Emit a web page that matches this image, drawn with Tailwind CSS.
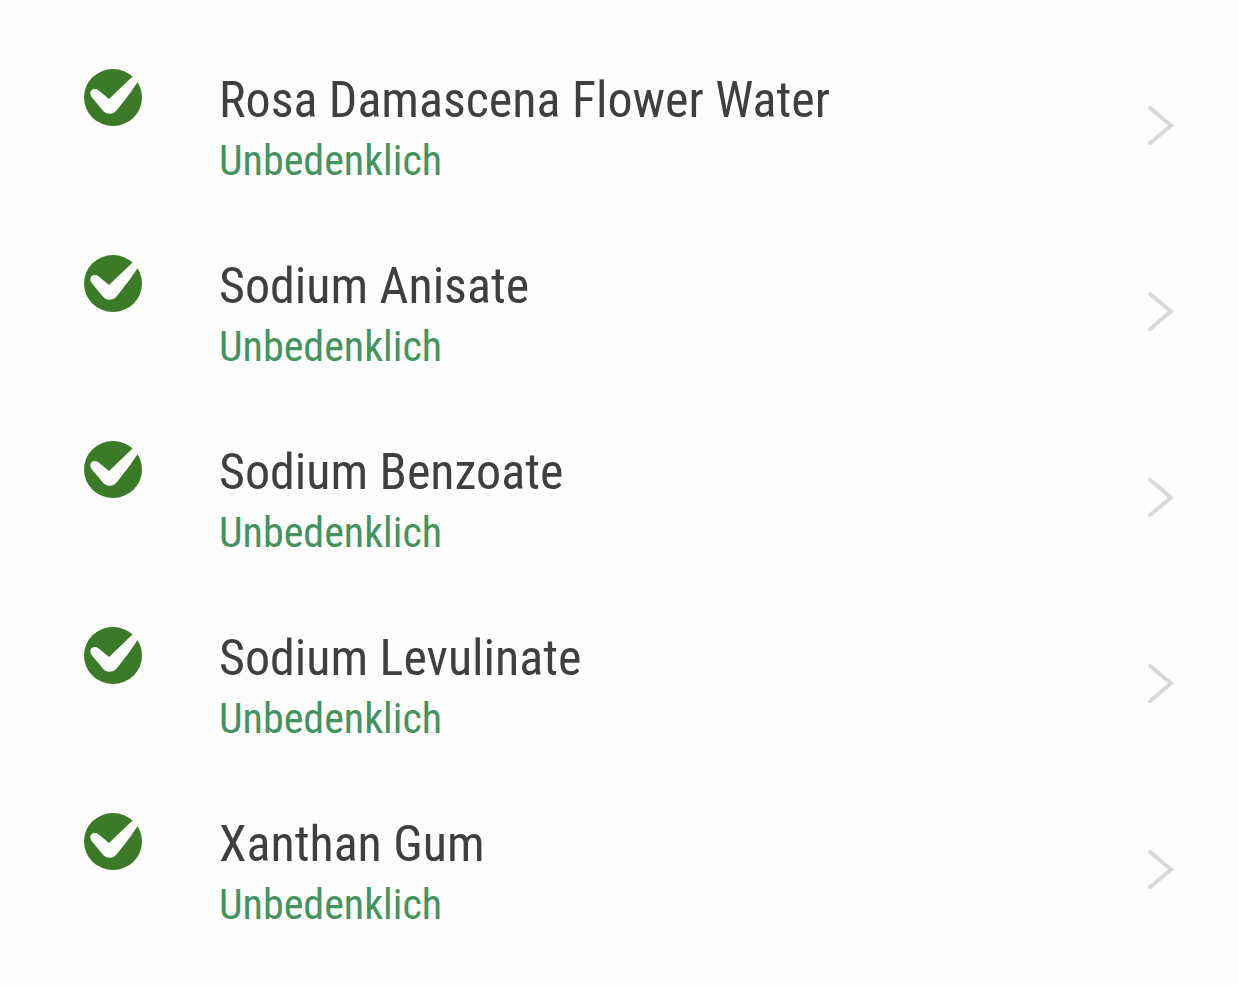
<!DOCTYPE html>
<html lang="de">
<head>
  <meta charset="UTF-8" />
  <meta name="viewport" content="width=device-width, initial-scale=1.0" />
  <title>Inhaltsstoffe</title>
  <script src="https://cdn.jsdelivr.net/npm/@tailwindcss/browser@4"></script>
</head>
<body class="bg-[#fdfdfd] text-[#3f3f3f] font-['Roboto_Condensed','Liberation_Sans_Narrow',sans-serif]">

  <!-- shared icons -->
  <svg class="hidden" aria-hidden="true">
    <symbol id="check" viewBox="0 0 58 57">
      <ellipse cx="29" cy="28.5" rx="29" ry="28.5" fill="#3b7a26" />
      <path fill="#fdfdfd" d="M25 30 L48.3 7.7 L51 5 L57 10 L53.7 13.3 C51.4 16.2 49 20 46 24.2 L33.8 40 C31 43.4 28.8 44.8 25.5 44.8 C22.3 44.8 20.2 43.2 18.2 40.8 L7.6 28 C5.8 25.4 5.8 22.4 8 20.8 C9.8 19.5 12.6 19.7 14.4 21.2 Z" />
    </symbol>
    <symbol id="chevron" viewBox="0 0 26 39">
      <path fill="none" stroke="#d8d8d8" stroke-width="4" stroke-linecap="round" stroke-linejoin="miter" d="M2.2 2 L23 19.5 L2.2 37" />
    </symbol>
  </svg>

  <ul class="py-8">
    <li>
      <a href="#" class="flex items-center pl-21 pr-16">
        <svg class="w-[58px] h-[57px] mt-[37px] mr-[77px] self-start shrink-0"><use href="#check" /></svg>
        <span class="flex-1 pt-9 pb-7">
          <span class="block text-[50px] leading-[64px]">Rosa Damascena Flower Water</span>
          <span class="block text-[42px] leading-[58px] text-[#439260]">Unbedenklich</span>
        </span>
        <svg class="w-[26px] h-[39px] shrink-0"><use href="#chevron" /></svg>
      </a>
    </li>
    <li>
      <a href="#" class="flex items-center pl-21 pr-16">
        <svg class="w-[58px] h-[57px] mt-[37px] mr-[77px] self-start shrink-0"><use href="#check" /></svg>
        <span class="flex-1 pt-9 pb-7">
          <span class="block text-[50px] leading-[64px]">Sodium Anisate</span>
          <span class="block text-[42px] leading-[58px] text-[#439260]">Unbedenklich</span>
        </span>
        <svg class="w-[26px] h-[39px] shrink-0"><use href="#chevron" /></svg>
      </a>
    </li>
    <li>
      <a href="#" class="flex items-center pl-21 pr-16">
        <svg class="w-[58px] h-[57px] mt-[37px] mr-[77px] self-start shrink-0"><use href="#check" /></svg>
        <span class="flex-1 pt-9 pb-7">
          <span class="block text-[50px] leading-[64px]">Sodium Benzoate</span>
          <span class="block text-[42px] leading-[58px] text-[#439260]">Unbedenklich</span>
        </span>
        <svg class="w-[26px] h-[39px] shrink-0"><use href="#chevron" /></svg>
      </a>
    </li>
    <li>
      <a href="#" class="flex items-center pl-21 pr-16">
        <svg class="w-[58px] h-[57px] mt-[37px] mr-[77px] self-start shrink-0"><use href="#check" /></svg>
        <span class="flex-1 pt-9 pb-7">
          <span class="block text-[50px] leading-[64px]">Sodium Levulinate</span>
          <span class="block text-[42px] leading-[58px] text-[#439260]">Unbedenklich</span>
        </span>
        <svg class="w-[26px] h-[39px] shrink-0"><use href="#chevron" /></svg>
      </a>
    </li>
    <li>
      <a href="#" class="flex items-center pl-21 pr-16">
        <svg class="w-[58px] h-[57px] mt-[37px] mr-[77px] self-start shrink-0"><use href="#check" /></svg>
        <span class="flex-1 pt-9 pb-7">
          <span class="block text-[50px] leading-[64px]">Xanthan Gum</span>
          <span class="block text-[42px] leading-[58px] text-[#439260]">Unbedenklich</span>
        </span>
        <svg class="w-[26px] h-[39px] shrink-0"><use href="#chevron" /></svg>
      </a>
    </li>
  </ul>

</body>
</html>
